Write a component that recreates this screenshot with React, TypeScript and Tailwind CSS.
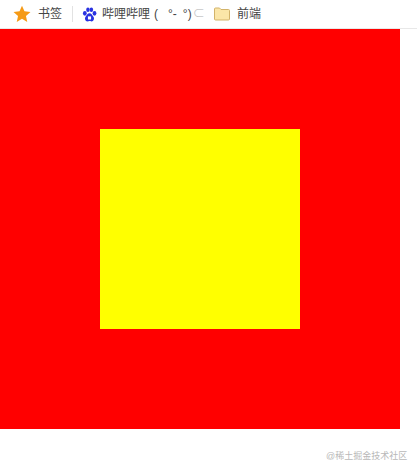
const App = () => {
    return (
        <div className="relative h-[472px] w-[417px] overflow-hidden bg-white font-['Liberation_Sans','Noto_Sans_CJK_SC',sans-serif]">
            <nav className="flex h-[29px] items-center border-b border-[#e8e8e8] bg-white text-[12px] text-[#444]">
                <svg className="ml-[13px] h-[18px] w-[18px]" viewBox="0 0 24 24">
                    <path fill="#f59a16" d="M12 1l3.300 7.400 8 .8-6 5.400 1.700 7.900L12 18.400l-7 4.100 1.700-7.900-6-5.400 8-.8z" />
                </svg>
                <span className="ml-[7px]">书签</span>
                <span className="ml-[10px] h-4 w-px bg-[#e2e2e2]" />
                <svg className="ml-[9px] h-[15px] w-[15px]" viewBox="0 0 24 24">
                    <g fill="#2932e1">
                        <ellipse cx="4.500" cy="10" rx="3" ry="3.800" />
                        <ellipse cx="9.500" cy="4.500" rx="2.800" ry="3.600" />
                        <ellipse cx="15" cy="4.500" rx="2.800" ry="3.600" />
                        <ellipse cx="20" cy="10" rx="3" ry="3.800" />
                        <path d="M12 10c3 0 4 3 6 5 2.500 2.500 1 8-3 8-1.500 0-2-.5-3-.5s-1.500.5-3 .5c-4 0-5.500-5.500-3-8 2-2 3-5 6-5z" />
                    </g>
                    <path fill="#fff" d="M9.500 15h5v5h-5z" />
                </svg>
                <span className="ml-[5px] flex w-[104px] whitespace-nowrap">
                    <span>哔哩哔哩</span>
                    <span className="ml-[4px]">(</span>
                    <span className="ml-[10px]">°-</span>
                    <span className="ml-[6px]">°)</span>
                    <span className="ml-[1px] text-[#c8c8c8]">⊂</span>
                </span>
                <svg className="ml-[8px] h-[14px] w-[16px]" viewBox="0 0 16 14">
                    <path fill="#fbe6a8" stroke="#d2b36a" d="M.5 2a1 1 0 0 1 1-1h4l1.500 1.500h7.500a1 1 0 0 1 1 1v8.500a1 1 0 0 1-1 1h-13a1 1 0 0 1-1-1z" />
                </svg>
                <span className="ml-[7px]">前端</span>
            </nav>
            <div className="flex h-[400px] w-[400px] items-center justify-center bg-[#ff0000]">
                <div className="h-[200px] w-[200px] bg-[#ffff00]" />
            </div>
            <span className="absolute left-[326px] top-[450px] whitespace-nowrap text-[9px] leading-[12px] text-[#b8b8b8]">@稀土掘金技术社区</span>
        </div>
    );
}

export default App;
